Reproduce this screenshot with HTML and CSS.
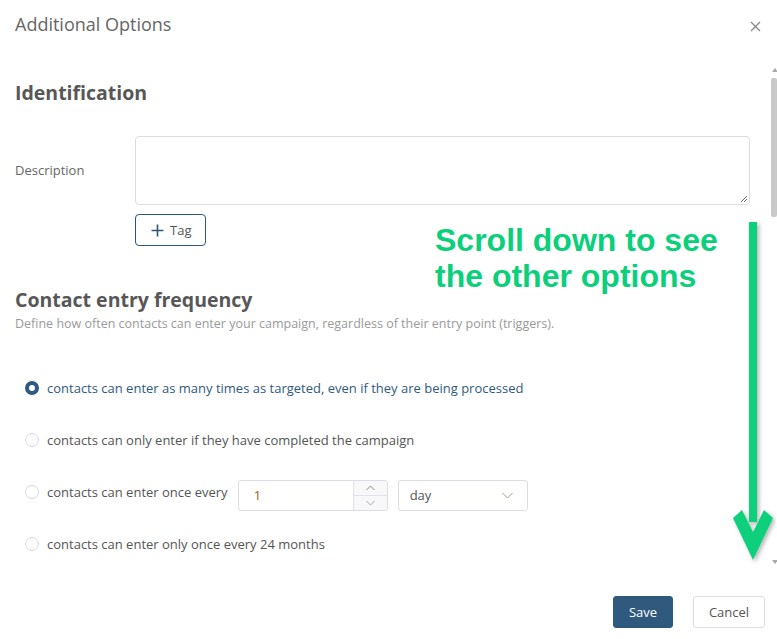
FILE: index.html
```html
<!DOCTYPE html>
<html>
<head>
<meta charset="utf-8">
<link rel="stylesheet" href="styles.css">
</head>
<body>
<div class="modal">
  <header class="modal-header">
    <h1 class="modal-title">Additional Options</h1>
    <button class="close" aria-label="Close">
      <svg width="11" height="11" viewBox="0 0 11 11"><path d="M1 1L10 10M10 1L1 10" stroke="#8a8a8a" stroke-width="1.4"/></svg>
    </button>
  </header>
  <div class="modal-body">
    <h2 class="section-title first">Identification</h2>
    <div class="field-row">
      <label class="field-label">Description</label>
      <div class="textarea">
        <svg class="grip" width="9" height="9" viewBox="0 0 9 9"><path d="M8 2L2 8M8 5L5 8" stroke="#666" stroke-width="1"/></svg>
      </div>
    </div>
    <div class="tag-row">
      <button class="tag-btn"><svg width="13" height="13" viewBox="0 0 13 13"><path d="M6.5 0.5V12.5M0.5 6.5H12.5" stroke="#2f5577" stroke-width="1.6"/></svg>Tag</button>
    </div>

    <h2 class="section-title second">Contact entry frequency</h2>
    <p class="section-desc">Define how often contacts can enter your campaign, regardless of their entry point (triggers).</p>

    <div class="options">
      <div class="option checked"><span class="radio"></span><span>contacts can enter as many times as targeted, even if they are being processed</span></div>
      <div class="option"><span class="radio"></span><span>contacts can only enter if they have completed the campaign</span></div>
      <div class="option"><span class="radio"></span><span>contacts can enter once every</span>
        <div class="number">
          <span class="num-value">1</span>
          <div class="spin">
            <span class="spin-btn"><svg width="9" height="6" viewBox="0 0 9 6"><path d="M0.5 5L4.5 1L8.5 5" fill="none" stroke="#888" stroke-width="1"/></svg></span>
            <span class="spin-btn"><svg width="9" height="6" viewBox="0 0 9 6"><path d="M0.5 1L4.5 5L8.5 1" fill="none" stroke="#aaa" stroke-width="1"/></svg></span>
          </div>
        </div>
        <div class="select"><span>day</span><svg width="11" height="7" viewBox="0 0 11 7"><path d="M0.5 1L5.5 6L10.5 1" fill="none" stroke="#999" stroke-width="1"/></svg></div>
      </div>
      <div class="option"><span class="radio"></span><span>contacts can enter only once every 24 months</span></div>
    </div>
  </div>
  <footer class="modal-footer">
    <button class="btn primary">Save</button>
    <button class="btn">Cancel</button>
  </footer>

  <div class="scrollbar">
    <span class="sb-up"></span>
    <span class="sb-thumb"></span>
    <span class="sb-down"></span>
  </div>

  <div class="hint">Scroll down to see<br>the other options</div>
  <svg class="hint-arrow" width="46" height="348" viewBox="0 0 46 348">
    <defs>
      <filter id="sh" x="-50%" y="-10%" width="200%" height="120%">
        <feDropShadow dx="2" dy="2" stdDeviation="2" flood-color="#000" flood-opacity="0.3"/>
      </filter>
    </defs>
    <g filter="url(#sh)" fill="#0bcf7b">
      <rect x="19" y="4" width="8" height="300"/>
      <path d="M3 300L12 292L23 314L34 292L43 300L23 342Z"/>
    </g>
  </svg>
</div>
</body>
</html>
```
FILE: styles.css
```css
* { box-sizing: border-box; }
html, body { margin: 0; padding: 0; background: #fff; }
body {
  font-family: "Open Sans", "Noto Sans", sans-serif;
  color: #555;
  width: 777px;
  height: 639px;
  overflow: hidden;
}
.modal {
  position: relative;
  width: 777px;
  height: 639px;
  display: flex;
  flex-direction: column;
}
.modal-header {
  display: flex;
  justify-content: space-between;
  align-items: flex-start;
  padding: 11px 16px 0 15px;
  height: 62px;
}
.modal-title {
  margin: 0;
  font-size: 18px;
  font-weight: 400;
  line-height: 26px;
  color: #666;
}
.close {
  border: 0;
  background: none;
  padding: 0;
  margin-top: 10px;
  width: 11px;
  height: 11px;
  display: flex;
}
.modal-body {
  flex: 1;
  padding: 0 27px 0 15px;
}
.section-title {
  margin: 0;
  font-size: 19.5px;
  font-weight: 700;
  color: #575757;
  line-height: 28px;
}
.section-title.first { margin-top: 17px; }
.field-row {
  display: flex;
  align-items: center;
  margin-top: 29px;
}
.field-label {
  width: 120px;
  font-size: 13px;
  color: #666;
  margin-top: -2px;
}
.textarea {
  position: relative;
  width: 615px;
  height: 69px;
  border: 1px solid #dcdce3;
  border-radius: 4px;
}
.grip {
  position: absolute;
  right: 1px;
  bottom: 1px;
}
.tag-row {
  padding-left: 120px;
  margin-top: 9px;
}
.tag-btn {
  display: inline-flex;
  align-items: center;
  gap: 6px;
  height: 32px;
  width: 71px;
  padding: 0 0 0 15px;
  border: 1px solid #2f5577;
  border-radius: 4px;
  background: #fff;
  font-family: inherit;
  font-size: 13px;
  color: #555;
}
.section-title.second { margin-top: 40px; }
.section-desc {
  margin: 1px 0 0;
  font-size: 12.5px;
  color: #9a9a9a;
  line-height: 18px;
}
.options {
  margin-top: 29px;
  padding-left: 10px;
  display: flex;
  flex-direction: column;
}
.option {
  display: flex;
  align-items: center;
  height: 52px;
  font-size: 13px;
  color: #555;
}
.option.checked { color: #2f5a7e; }
.radio {
  width: 14px;
  height: 14px;
  border-radius: 50%;
  border: 1px solid #d8d8de;
  margin-right: 8px;
  flex: none;
}
.option.checked .radio {
  border: 4px solid #2f5a7e;
  background: #fff;
}
.number {
  display: flex;
  margin: 6px 0 0 10px;
  width: 150px;
  height: 31px;
  border: 1px solid #dcdce3;
  border-radius: 3px;
  overflow: hidden;
}
.num-value {
  flex: 1;
  padding-left: 15px;
  display: flex;
  align-items: center;
  color: #a0602c;
  font-size: 13px;
}
.spin {
  width: 34px;
  display: flex;
  flex-direction: column;
  border-left: 1px solid #e2e2e8;
  background: #f8f8fa;
}
.spin-btn {
  flex: 1;
  display: flex;
  align-items: center;
  justify-content: center;
}
.spin-btn + .spin-btn { border-top: 1px solid #e2e2e8; }
.select {
  margin: 6px 0 0 10px;
  width: 130px;
  height: 31px;
  border: 1px solid #dcdce3;
  border-radius: 3px;
  display: flex;
  align-items: center;
  justify-content: space-between;
  padding: 0 14px 0 11px;
  font-size: 13px;
  color: #555;
}
.modal-footer {
  display: flex;
  justify-content: flex-end;
  gap: 20px;
  padding: 0 12px 11px 0;
}
.btn {
  height: 32px;
  padding: 0 15px;
  border: 1px solid #dcdce3;
  border-radius: 3px;
  background: #fff;
  font-family: inherit;
  font-size: 13px;
  color: #555;
}
.btn.primary {
  width: 60px;
  background: #2f5a7e;
  border-color: #2f5a7e;
  color: #fff;
  padding: 0;
}
.btn:not(.primary) { width: 72px; padding: 0; }
.scrollbar {
  position: absolute;
  right: 0;
  top: 66px;
  width: 6px;
  height: 500px;
}
.sb-up, .sb-down {
  position: absolute;
  left: 1px;
  width: 0;
  height: 0;
  border-left: 3px solid transparent;
  border-right: 3px solid transparent;
}
.sb-up { top: 2px; border-bottom: 4px solid #a8a8a8; }
.sb-down { bottom: 2px; border-top: 4px solid #a8a8a8; }
.sb-thumb {
  position: absolute;
  left: 0;
  top: 12px;
  width: 6px;
  height: 139px;
  background: #c8c8c8;
  border-radius: 2px;
}
.hint {
  position: absolute;
  left: 435px;
  top: 222px;
  font-family: "Liberation Sans", Arial, sans-serif;
  font-weight: 700;
  font-size: 32px;
  line-height: 36px;
  color: #0bcf7b;
}
.hint-arrow {
  position: absolute;
  left: 730px;
  top: 218px;
}
```
